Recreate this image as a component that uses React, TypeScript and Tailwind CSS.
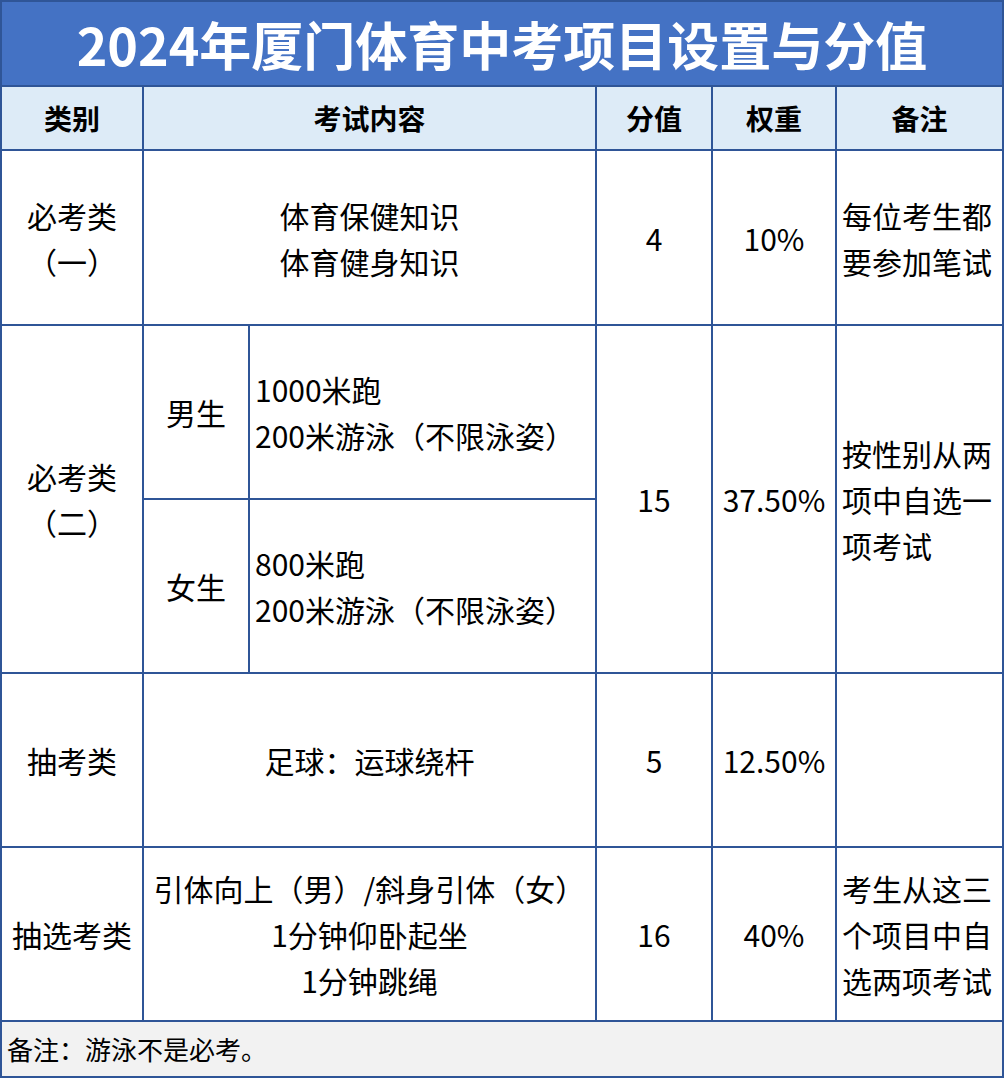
const cell = "flex items-center justify-center bg-white text-center";
const head = "flex items-center justify-center bg-[#ddebf7] font-bold text-[28px]";

function Lines({ lines }: { lines: string[] }) {
  return (
    <div>
      {lines.map((l) => (
        <div key={l}>{l}</div>
      ))}
    </div>
  );
}

export default function App() {
  return (
    <div className="w-[1004px] font-['Noto_Sans_CJK_SC','Noto_Sans',sans-serif] text-black">
      <div className="grid grid-cols-[140px_104px_345px_114px_122px_165px] grid-rows-[83px_62px_173px_172px_172px_172px_172px_54px] gap-[2px] bg-[#2f5597] p-[2px] text-[30px] leading-[46px]">
        <div className="col-span-6 flex items-center justify-center bg-[#4472c4] text-[52px] font-bold leading-none text-white">
          2024年厦门体育中考项目设置与分值
        </div>

        <div className={head}>类别</div>
        <div className={`${head} col-span-2`}>考试内容</div>
        <div className={head}>分值</div>
        <div className={head}>权重</div>
        <div className={head}>备注</div>

        <div className={cell}>
          <Lines lines={["必考类", "（一）"]} />
        </div>
        <div className={`${cell} col-span-2`}>
          <Lines lines={["体育保健知识", "体育健身知识"]} />
        </div>
        <div className={cell}>4</div>
        <div className={cell}>10%</div>
        <div className="flex items-center bg-white pl-[5px]">
          <Lines lines={["每位考生都", "要参加笔试"]} />
        </div>

        <div className={`${cell} row-span-2`}>
          <Lines lines={["必考类", "（二）"]} />
        </div>
        <div className={cell}>男生</div>
        <div className="flex items-center bg-white pl-[5px]">
          <Lines lines={["1000米跑", "200米游泳（不限泳姿）"]} />
        </div>
        <div className={`${cell} row-span-2`}>15</div>
        <div className={`${cell} row-span-2`}>37.50%</div>
        <div className="row-span-2 flex items-center bg-white pl-[5px]">
          <Lines lines={["按性别从两", "项中自选一", "项考试"]} />
        </div>
        <div className={cell}>女生</div>
        <div className="flex items-center bg-white pl-[5px]">
          <Lines lines={["800米跑", "200米游泳（不限泳姿）"]} />
        </div>

        <div className={cell}>抽考类</div>
        <div className={`${cell} col-span-2`}>足球：运球绕杆</div>
        <div className={cell}>5</div>
        <div className={cell}>12.50%</div>
        <div className="bg-white" />

        <div className={cell}>抽选考类</div>
        <div className={`${cell} col-span-2`}>
          <Lines lines={["引体向上（男）/斜身引体（女）", "1分钟仰卧起坐", "1分钟跳绳"]} />
        </div>
        <div className={cell}>16</div>
        <div className={cell}>40%</div>
        <div className="flex items-center bg-white pl-[5px]">
          <Lines lines={["考生从这三", "个项目中自", "选两项考试"]} />
        </div>

        <div className="col-span-6 flex items-center bg-[#f2f2f2] pl-[5px] text-[26px]">
          备注：游泳不是必考。
        </div>
      </div>
    </div>
  );
}
